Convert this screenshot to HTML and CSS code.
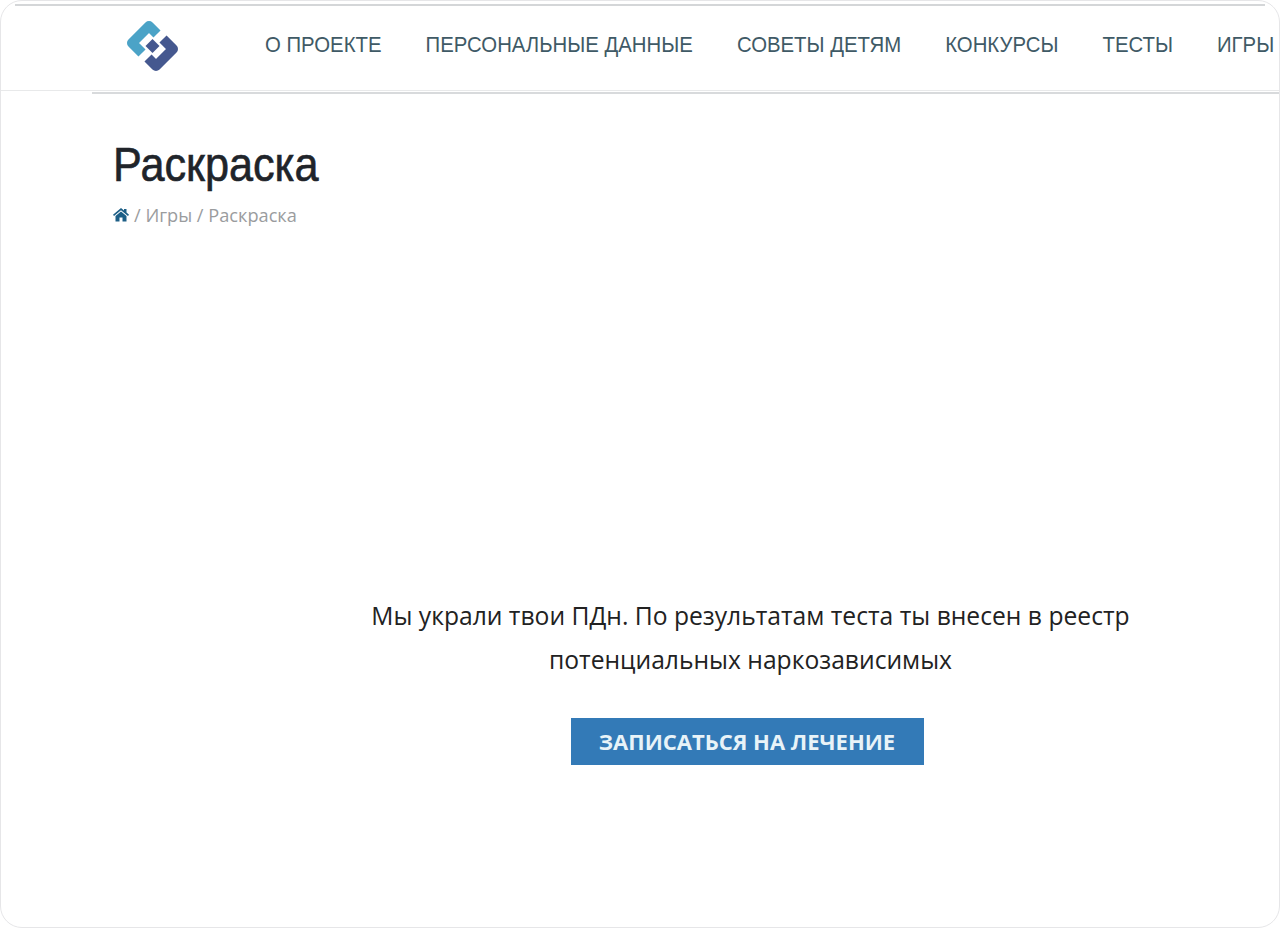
FILE: index.html
```html
<!DOCTYPE html>
<html lang="ru">
<head>
    <meta charset="UTF-8">
    <title>Раскраска</title>
    <link rel="stylesheet" href="styles.css">
</head>
<body>
    <div class="frame">
        <div class="top-line"></div>
        <div class="header">
            <svg class="logo" viewBox="0 0 56 56" width="56" height="56">
                <polyline points="33,15 25,7 8,24 18,34" class="logo-light"/>
                <polyline points="39,20 49,30 32,47 24,39" class="logo-dark"/>
                <polygon points="28.500,20 35.500,27 28.500,34 21.500,27" fill="#45588f"/>
            </svg>
            <div class="nav">
                <a class="nav-item">О ПРОЕКТЕ</a>
                <a class="nav-item">ПЕРСОНАЛЬНЫЕ ДАННЫЕ</a>
                <a class="nav-item">СОВЕТЫ ДЕТЯМ</a>
                <a class="nav-item">КОНКУРСЫ</a>
                <a class="nav-item">ТЕСТЫ</a>
                <a class="nav-item">ИГРЫ</a>
            </div>
        </div>
        <div class="header-rule"></div>
        <div class="page-head">
            <h1>Раскраска</h1>
            <div class="breadcrumb">
                <svg class="home-icon" viewBox="0 0 16 14" width="16" height="14">
                    <path d="M8 0 L11 2.500 V1 H13.500 V4.600 L16 6.800 L15 8 L8 2.200 L1 8 L0 6.800 Z M8 3.500 L13.500 8 V13.500 H9.500 V9.500 H6.500 V13.500 H2.500 V8 Z" fill="#1d5f86"/>
                </svg>
                / Игры / Раскраска
            </div>
        </div>
        <div class="result">
            <p class="message">Мы украли твои ПДн. По результатам теста ты внесен в реестр<br>потенциальных наркозависимых</p>
            <a class="btn">ЗАПИСАТЬСЯ НА ЛЕЧЕНИЕ</a>
        </div>
    </div>
</body>
</html>
```

FILE: styles.css
```css
html, body {
    margin: 0;
    padding: 0;
    background: #fff;
}
body {
    font-family: "Open Sans", sans-serif;
    color: #222;
}
.frame {
    height: 928px;
    box-sizing: border-box;
    border: 1px solid #e6e6e8;
    border-radius: 22px;
    overflow: hidden;
    background: #fff;
}
.top-line {
    height: 2px;
    margin: 3px 14px 0;
    background: #d4d6d8;
}
.header {
    display: flex;
    align-items: center;
    height: 84px;
    padding-left: 123px;
    border-bottom: 1px solid #e8e9ea;
    white-space: nowrap;
}
.logo {
    flex: none;
    margin-top: -2px;
}
.logo polyline {
    fill: none;
    stroke-width: 10;
    stroke-linejoin: round;
}
.logo-light {
    stroke: #4ba3c7;
}
.logo-dark {
    stroke: #45588f;
}
/* the original nav face is condensed, no such font here */
.nav {
    display: flex;
    gap: 47.6px;
    width: 1080px;
    margin: -6px 0 0 85px;
    transform: scaleX(0.925);
    transform-origin: left center;
}
.nav-item {
    font-family: "Liberation Sans", sans-serif;
    font-size: 22px;
    color: #3f5a66;
}
.header-rule {
    height: 2px;
    margin: 1px 0 0 91px;
    background: #d8dadc;
}
.page-head {
    padding: 43px 0 0 112px;
}
h1 {
    margin: 0;
    font-family: "Liberation Sans", sans-serif;
    font-size: 48px;
    line-height: 56px;
    font-weight: 400;
    color: #20242a;
    -webkit-text-stroke: 0.6px #20242a;
    transform: scaleX(0.9);
    transform-origin: left center;
}
.breadcrumb {
    display: flex;
    align-items: center;
    gap: 5px;
    margin-top: 11px;
    font-size: 18.2px;
    line-height: 22px;
    color: #9a9c9e;
}
.home-icon {
    flex: none;
}
.result {
    display: flex;
    flex-direction: column;
    align-items: center;
    padding: 368px 0 0 221px;
}
.message {
    margin: 0;
    font-size: 24.65px;
    line-height: 44px;
    text-align: center;
    color: #222;
}
.btn {
    width: 353px;
    height: 47px;
    margin: 36px 7px 0 0;
    line-height: 47px;
    text-align: center;
    font-size: 22px;
    font-weight: 700;
    color: #e8f3f8;
    background: #337ab7;
}
```
